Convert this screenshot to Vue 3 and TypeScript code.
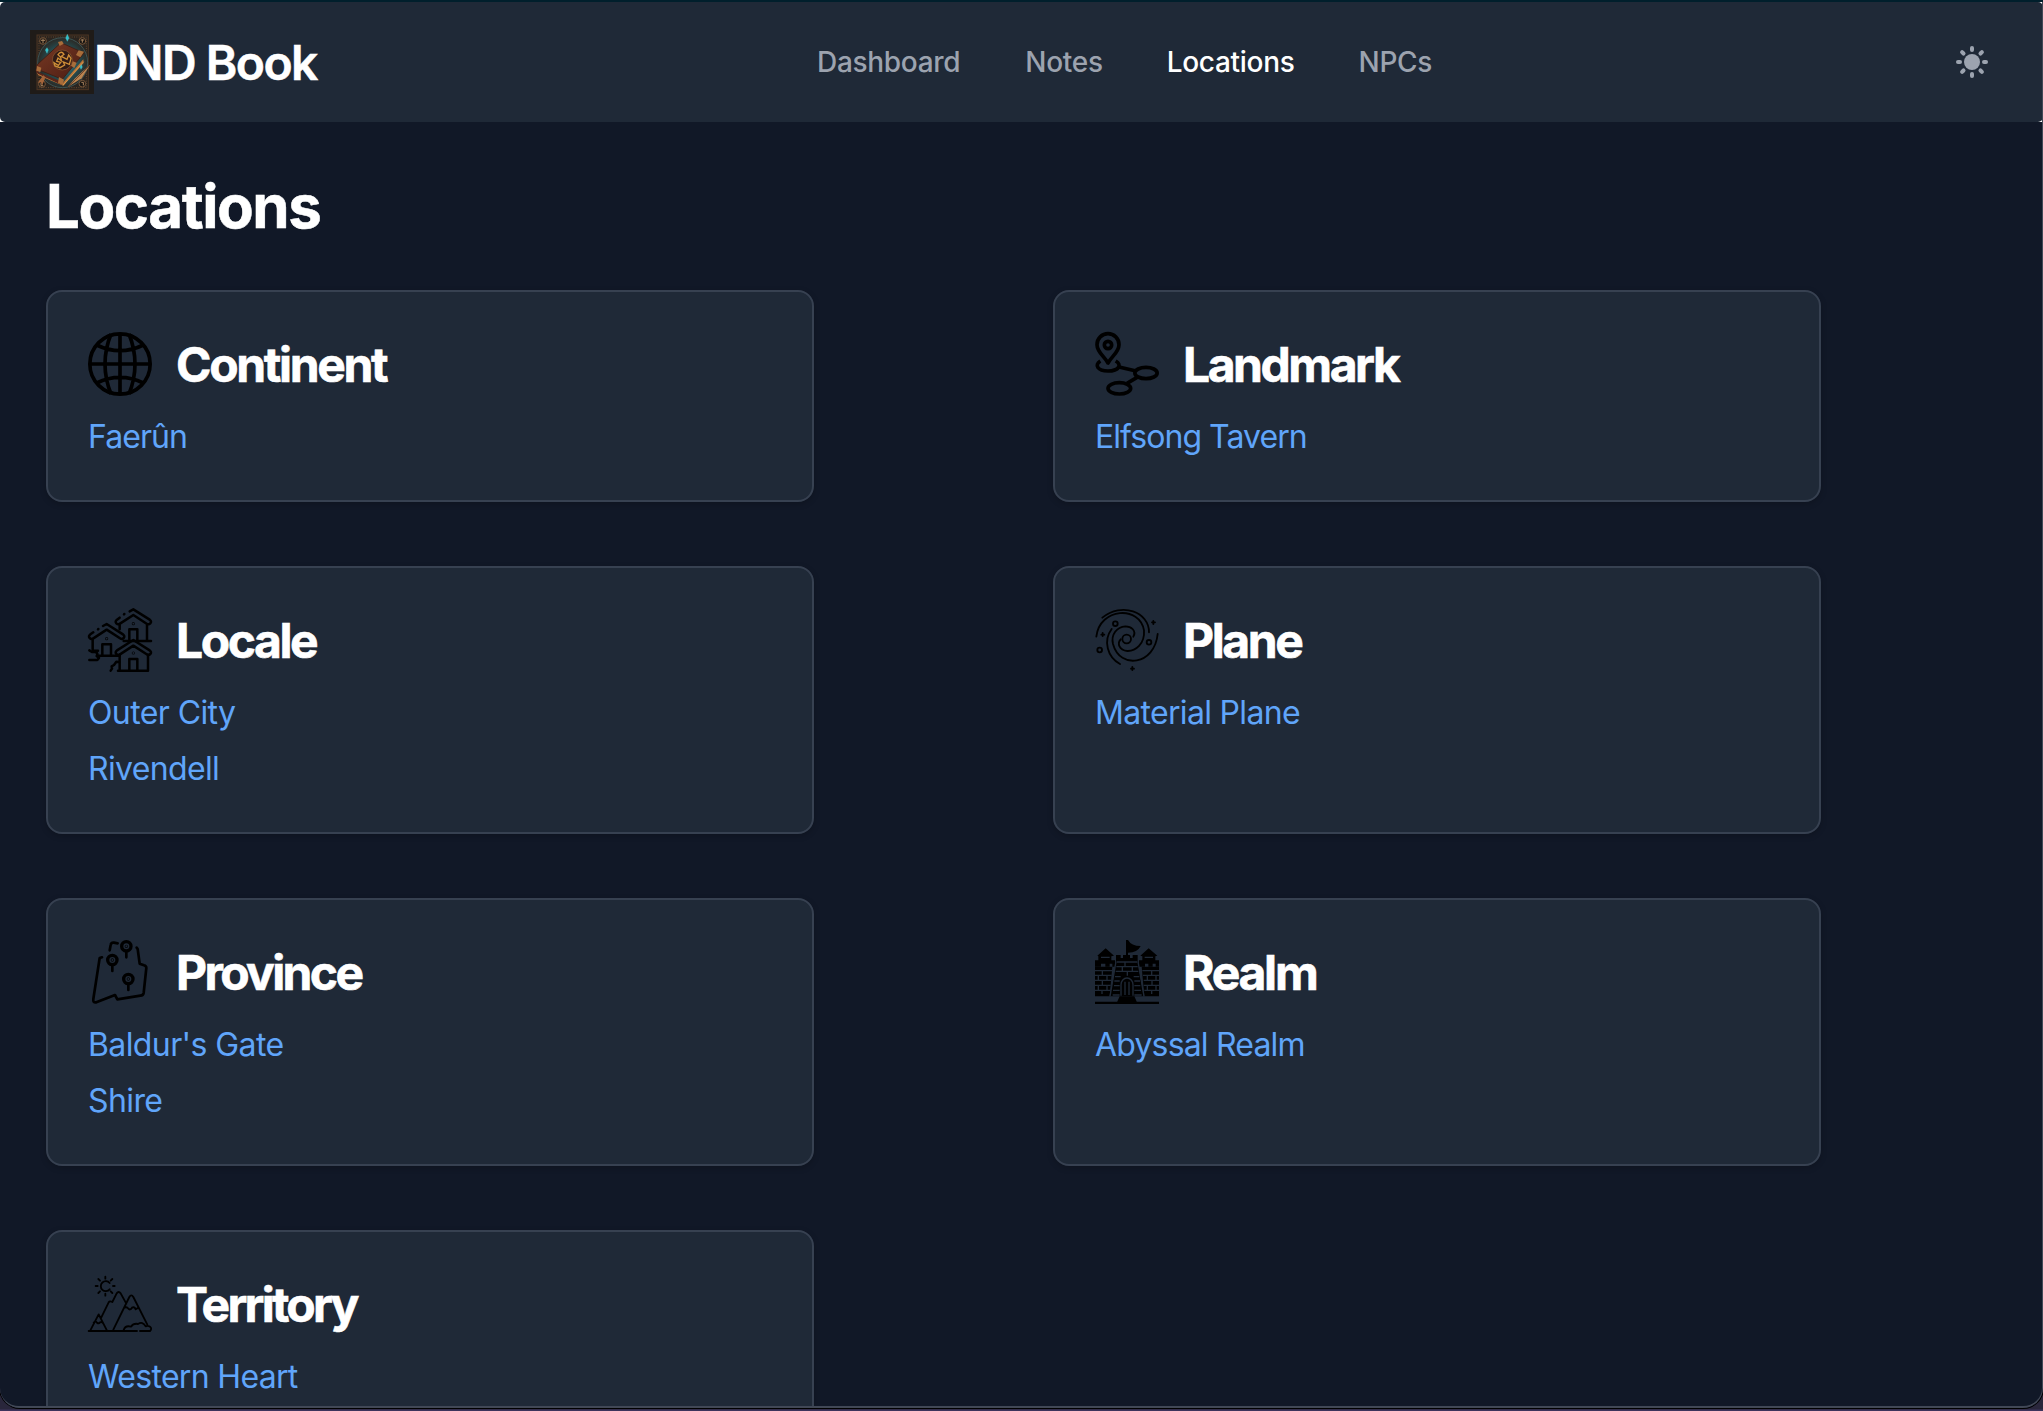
<script setup lang="ts">
interface Entry {
  label: string
  spacing: number
}

interface Group {
  name: string
  icon: string
  spacing: number
  links: Entry[]
}

const nav = [
  { label: 'Dashboard', active: false },
  { label: 'Notes', active: false },
  { label: 'Locations', active: true },
  { label: 'NPCs', active: false },
]

const groups: Group[] = [
  { name: 'Continent', icon: 'continent', spacing: -2.35, links: [{ label: 'Faerûn', spacing: -0.95 }] },
  { name: 'Landmark', icon: 'landmark', spacing: -2.45, links: [{ label: 'Elfsong Tavern', spacing: -0.95 }] },
  {
    name: 'Locale',
    icon: 'locale',
    spacing: -2.43,
    links: [
      { label: 'Outer City', spacing: -0.6 },
      { label: 'Rivendell', spacing: -0.65 },
    ],
  },
  { name: 'Plane', icon: 'plane', spacing: -2.4, links: [{ label: 'Material Plane', spacing: -0.68 }] },
  {
    name: 'Province',
    icon: 'province',
    spacing: -2.65,
    links: [
      { label: "Baldur's Gate", spacing: -0.6 },
      { label: 'Shire', spacing: -0.6 },
    ],
  },
  { name: 'Realm', icon: 'realm', spacing: -2.25, links: [{ label: 'Abyssal Realm', spacing: -0.82 }] },
  { name: 'Territory', icon: 'territory', spacing: -2.75, links: [{ label: 'Western Heart', spacing: -0.68 }] },
]

const rays = [0, 45, 90, 135, 180, 225, 270, 315]
</script>

<template>
  <div class="desktop">
    <div class="window">
      <div class="nav-wrap">
        <header class="nav">
          <div class="brand">
            <svg class="logo" viewBox="90 90 192 192">
              <defs>
                <radialGradient id="glow"><stop offset="0" stop-color="#2f8791" /><stop offset=".65" stop-color="#25494d" /><stop offset="1" stop-color="#2b2621" /></radialGradient>
                <linearGradient id="cover" x1="0" y1="0" x2="1" y2="1"><stop offset="0" stop-color="#7a3a24" /><stop offset="1" stop-color="#4a1c13" /></linearGradient>
              </defs>
              <rect x="90" y="90" width="192" height="192" fill="#1f1b18" />
              <rect x="111" y="105" width="154" height="164" fill="#2a241f" stroke="#4d3523" stroke-width="3" />
              <rect x="117" y="111" width="142" height="152" fill="none" stroke="#65462d" stroke-width="3" stroke-dasharray="3 4" />
              <circle cx="188" cy="188" r="77" fill="url(#glow)" />
              <circle cx="188" cy="188" r="75" fill="none" stroke="#47686a" stroke-width="2" />
              <g fill="#181512" stroke="#77563a" stroke-width="3">
                <circle cx="129" cy="123" r="10" /><circle cx="247" cy="123" r="10" /><circle cx="126" cy="252" r="10" /><circle cx="247" cy="251" r="10" />
              </g>
              <path d="M123 121h12M129 116v14M242 120h10M247 118v10M123 248v9h7M244 247h6v9" stroke="#a98560" stroke-width="3" fill="none" />
              <path d="M112 218l76 32 62-72 1 11-61 68-75-31-8-17z" fill="#b87235" />
              <path d="M112 220l78 35 61-70" fill="none" stroke="#e0a757" stroke-width="2" />
              <path d="M183 128l69 31-65 79-77-31q-4-7 3-14z" fill="url(#cover)" stroke="#402016" stroke-width="3" />
              <path d="M109 205q-5 9 4 16l74 35 3-9-75-30z" fill="#58251a" />
              <path d="M174 126l12-3 5 8-12 7zM236 151l16 4-11 17-13-7zM111 198l13 5-3 13-12-4zM177 231l15 8-4 17-14-8zM218 184l12 4-7 16-10-7z" fill="#a86d3a" />
              <circle cx="187" cy="180" r="30" fill="#321b16" stroke="#8a5a30" stroke-width="2" />
              <path d="M174 164q10-14 18-1l-8 6 17 9 5-13 7 10-5 18-18-7 4 9-14 8-15-5-3-10 13 8 7-9-12-3 4-10 10 8-2-10z" fill="none" stroke="#cf8f38" stroke-width="4" />
              <path d="M141 143l4 7-4 10-5-10zM202 103l5 11-5 10-5-10zM244 194l3 7-4 7-3-7z" fill="#30bfc9" stroke="#5ccbd0" stroke-width="1" />
              <path d="M270 195l-25 40-42 26 21-25 24-22z" fill="#b98450" /><path d="M269 196l-65 65" stroke="#72462c" stroke-width="3" />
              <path d="M130 226l-17 22 10-1 4 9 9-24" fill="#a5653a" />
            </svg>
            <span class="brand-name">DND Book</span>
          </div>
          <nav class="links">
            <a v-for="n in nav" :key="n.label" class="nav-link" :class="{ active: n.active }">{{ n.label }}</a>
          </nav>
          <svg class="sun" viewBox="-16 -16 32 32">
            <circle r="8" />
            <rect v-for="r in rays" :key="r" x="-2" y="-16" width="4" height="6" rx="2" :transform="`rotate(${r})`" />
          </svg>
        </header>
      </div>

      <main class="content">
        <h1>Locations</h1>
        <div class="cards">
          <section v-for="g in groups" :key="g.name" class="card">
            <div class="card-head">
              <svg v-if="g.icon === 'continent'" class="icon" viewBox="144 156 192 192" fill="none" stroke="#000" stroke-width="11">
                <circle cx="240" cy="252" r="90.5" />
                <path d="M240 160v184M148 252h184M213 162q-36 90 0 180M267 162q36 90 0 180M170 195q70 34 140 0M170 309q70-34 140 0" />
              </svg>

              <svg v-else-if="g.icon === 'landmark'" class="icon" viewBox="135 156 192 192" fill="none" stroke="#000" stroke-width="11" stroke-linejoin="round">
                <path d="M174 249C163 229 141 216 141 194a33 33 0 0 1 66 0C207 216 185 229 174 249z" />
                <circle cx="174" cy="195" r="11" />
                <path d="M151 243C132 255 143 273 174 273C207 273 217 254 197 243" />
                <ellipse cx="288" cy="279" rx="33.500" ry="17" />
                <ellipse cx="208" cy="325" rx="34" ry="17" />
                <path d="M207 261l48 11M231 310l34-20" />
              </svg>

              <svg v-else-if="g.icon === 'locale'" class="icon" viewBox="36 39 192 192" fill="none" stroke="#000" stroke-width="7.500" stroke-linecap="round" stroke-linejoin="round">
                <path d="M172 135l49 31q7 6 2 11-5 5-11 1l-40-26-40 26q-6 4-11-1-5-5 2-11z" />
                <path d="M131 179v48h85v-48M160 226v-34h24v34M126 227h90" /><circle cx="172" cy="174" r="1" />
                <path d="M161 49l11-6 49 31q7 6 2 11-5 5-11 1l-40-26-40 26q-6 4-11-1-5-5 2-11l8-6M144 58l1-1M131 86v17M213 87v50M160 136v-33h24v33M143 138h82" /><circle cx="172" cy="86" r="1" />
                <path d="M81 93l11-6 49 31q7 6 2 11-5 5-11 1l-40-26-40 26q-6 4-11-1-5-5 2-11l9-6M66 103l1-1M50 132v35h16M50 167M66 182h64M79 181v-33h26v33" /><circle cx="92" cy="131" r="1" />
                <path d="M40 166l8 5h12q7 7 2 12l7 6-5 6H40M129 201l-8-1-7 10-7 4 1 7-4 6" />
              </svg>

              <svg v-else-if="g.icon === 'plane'" class="icon" viewBox="39 39 192 192" fill="none" stroke="#000" stroke-width="5.500" stroke-linecap="round">
                <circle cx="134" cy="132" r="13" />
                <path d="M61 68C119 20 202 51 201 112M43 125C53 37 174 31 186 106C189 147 160 169 136 168C111 165 105 145 116 133M154 125C164 107 148 94 130 94C105 96 86 118 93 147C114 225 218 210 227 117M89 102C62 138 77 187 114 207" />
                <circle cx="100" cy="86" r="7" /><circle cx="53" cy="165" r="7" /><circle cx="201" cy="142" r="7" />
                <path d="M214 78v9M210 82h9M62 114v9M58 119h9M151 216v9M147 221h9" />
              </svg>

              <svg v-else-if="g.icon === 'province'" class="icon" viewBox="36 42 192 192" fill="none" stroke="#000" stroke-width="8" stroke-linecap="round" stroke-linejoin="round">
                <path d="M78 94l-7 2-19 123q-2 12 9 10l56-22 7 13 69-11q9-1 10-8l8-75q0-6-7-8l-13-5-6-44-3-4M101 73l3-16q1-8 10-7l11 2" />
                <g stroke-width="10"><circle cx="151" cy="61" r="14" /><circle cx="109" cy="102" r="14" /><circle cx="157" cy="159" r="14" /></g>
                <path d="M151 79v15M109 120v15M157 177v15" />
                <circle cx="151" cy="61" r="1" /><circle cx="109" cy="102" r="1" /><circle cx="157" cy="159" r="1" />
              </svg>

              <svg v-else-if="g.icon === 'realm'" class="icon" viewBox="39 42 192 192" fill="#000">
                <path d="M132 42h6q10 18 38 18-9 20-38 20v7h6v9h8v-9h15v18l18 106H84l18-106V87h14v9h7v-9h9z" />
                <path d="M46 89l25-22 25 22-8 2v12h11v19H91v-9h-8v9H70v-9H57v9H39v-19h10V91zM175 89l25-22 26 22-6 2v12h11v19h-10v-9h-9v9h-13v-9h-10v9h-18v-19h10V91z" />
                <path d="M39 122h52L83 211H39zM179 122h52v89h-44zM39 227h192v7H39zM113 211h44l8 18h-60z" />
                <g stroke="#1f2937" stroke-width="4" fill="none">
                  <path d="M57 94h26M188 94h25M39 134h52M39 148h50M39 163h49M39 178h47M39 193h46M181 134h50M183 148h48M185 163h46M185 178h46M187 193h44" />
                  <path d="M61 134v14M49 148v15M75 148v15M61 163v15M49 178v15M75 178v15M60 193v11M209 134v14M196 148v15M222 148v15M210 163v15M196 178v15M222 178v15M209 193v11M102 106L84 211M168 106l18 105" />
                  <path d="M105 108h60M103 122h64M101 136h68M129 108v14M151 122v14M121 122v14M136 137v12M99 152h17M97 165h16M96 179h17M93 193h20M92 207h21M155 152h17M157 165h17M157 179h18M157 193h20M157 207h22" />
                  <path d="M117 209v-33a18 20 0 0 1 36 0v33M129 207v-40M141 207v-40" />
                </g>
              </svg>

              <svg v-else class="icon" viewBox="36 36 192 192" fill="none" stroke="#000" stroke-width="5.500" stroke-linecap="round" stroke-linejoin="round">
                <path d="M101 69a15 15 0 1 0 0 19M88 50v6M88 101v6M59 78h6M111 78h5M67 57l5 5M104 62l5-5M67 99l5-5M104 94l5 5" />
                <path d="M38 213h145M192 213h30q7-7 0-13-6-4-13-1-9-16-23-7-13-3-21 8-17-5-22 10M43 211l25-48 25 49M53 188q6-6 10 0 5 4 9-1 7-3 10 4M76 172l22-45q3-5 11-1l13-26q6-8 12 0l17 31M112 209l48-98q6-10 12 0l42 83M145 143q8-4 12 3 5 6 11-3 7-4 11 5l8-5" />
              </svg>
              <h2 :style="{ letterSpacing: g.spacing + 'px' }">{{ g.name }}</h2>
            </div>
            <ul>
              <li v-for="l in g.links" :key="l.label">
                <a :style="{ letterSpacing: l.spacing + 'px' }">{{ l.label }}</a>
              </li>
            </ul>
          </section>
        </div>
      </main>
    </div>
  </div>
</template>

<style>
body { margin: 0; background: #29263b; overflow: hidden; }
</style>

<style scoped>
* { box-sizing: border-box; }
.desktop {
  height: 1411px;
  width: 2043px;
  overflow: hidden;
  padding-bottom: 3px;
  background: linear-gradient(#001f2c 0, #001f2c 2px, #29282c 3px, #29263b 1409px, #3c345c 1410px);
  font-family: Inter, "Liberation Sans", sans-serif;
}
.window {
  position: relative;
  height: 1408px;
  padding-top: 2px;
  overflow: hidden;
  background: linear-gradient(#001f2c 0 2px, #111827 2px);
  border-radius: 0 0 20px 20px;
  box-shadow: 0 0 0 1px #000;
}
.window::after {
  content: '';
  position: absolute;
  inset: 2px 0 0 -1px;
  border: solid #414856;
  border-width: 0 1px 2px;
  border-radius: 0 0 20px 20px;
  pointer-events: none;
}
.nav-wrap { background: #fff; height: 120px; }
.nav {
  height: 120px;
  background: #1f2937;
  border-radius: 5px;
  display: grid;
  grid-template-columns: 787px 1fr auto;
  align-items: center;
  padding: 0 55px 0 30px;
}
.brand { display: flex; align-items: center; }
.logo { width: 64px; height: 64px; }
.brand-name {
  margin-top: 2px;
  color: #fff;
  font-size: 48px;
  font-weight: 600;
  line-height: 64px;
  letter-spacing: -1.55px;
  white-space: nowrap;
  -webkit-text-stroke: 0.5px #fff;
}
.links { display: flex; gap: 64px; }
.nav-link { color: #9ca3af; font-size: 28px; font-weight: 500; line-height: 40px; letter-spacing: -0.3px; }
.nav-link:first-child { margin-right: 1px; }
.nav-link.active { color: #fff; }
.sun { width: 32px; height: 32px; fill: #9ca3af; }
.content { padding: 48px 46px 0; }
h1 {
  margin: 0;
  color: #fff;
  font-size: 60px;
  font-weight: 700;
  line-height: 72px;
  letter-spacing: -1.45px;
  -webkit-text-stroke: 0.5px #fff;
}
.cards { display: grid; grid-template-columns: 768px 768px; column-gap: 239px; row-gap: 64px; margin-top: 48px; }
.card {
  background: #1f2937;
  border: 2px solid #374151;
  border-radius: 16px;
  padding: 40px;
  box-shadow: 0 2px 6px rgba(0, 0, 0, 0.2);
}
.card-head { display: flex; align-items: center; height: 64px; gap: 24px; }
.icon { width: 64px; height: 64px; flex: none; overflow: visible; }
h2 {
  margin: 2px 0 0;
  color: #fff;
  font-size: 48px;
  font-weight: 700;
  line-height: 64px;
  -webkit-text-stroke: 0.6px #fff;
}
ul { list-style: none; margin: 16px 0 0; padding: 0; display: flex; flex-direction: column; gap: 8px; }
li { height: 48px; line-height: 50px; font-size: 32px; color: #60a5fa; }
</style>
